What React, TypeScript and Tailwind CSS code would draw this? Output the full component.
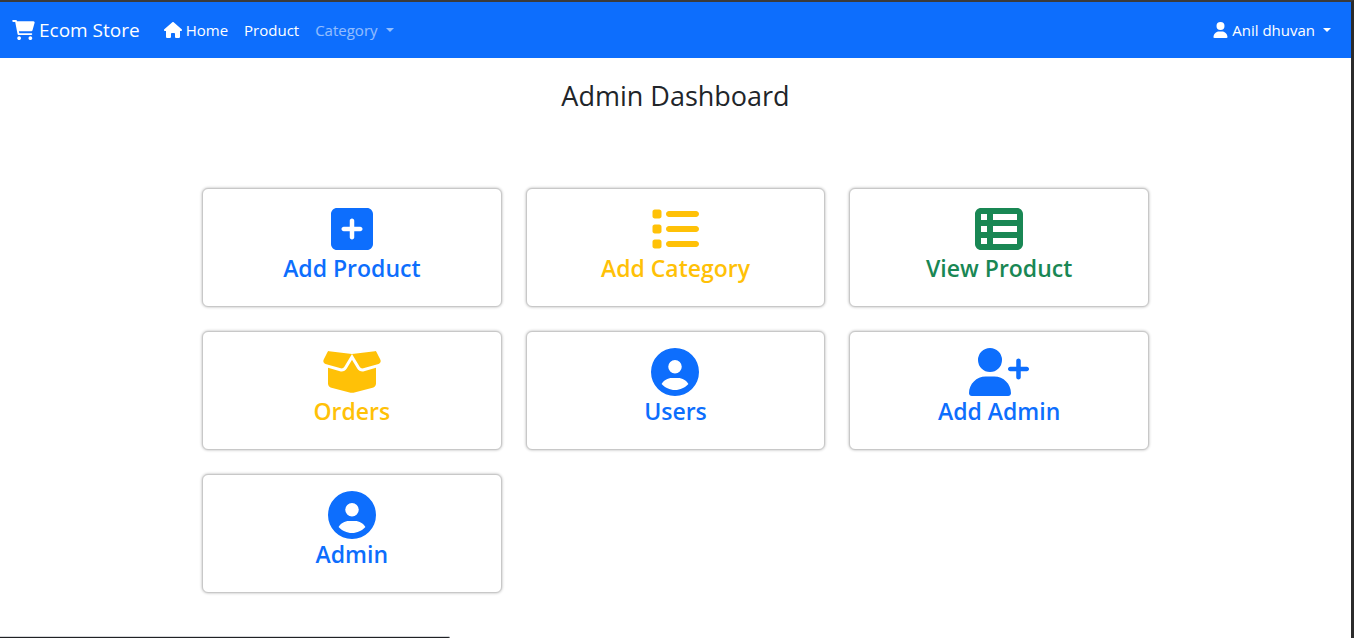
import type { ComponentType } from "react";
import {
  FaBoxOpen,
  FaCircleUser,
  FaHouse,
  FaList,
  FaSquarePlus,
  FaTableList,
  FaUser,
  FaUserPlus,
} from "react-icons/fa6";

type Card = {
  label: string;
  icon: ComponentType<{ className?: string }>;
  color: string;
};

const BLUE = "text-[#0d6efd]";
const YELLOW = "text-[#ffc107]";
const GREEN = "text-[#198754]";

const cards: Card[] = [
  { label: "Add Product", icon: FaSquarePlus, color: BLUE },
  { label: "Add Category", icon: FaList, color: YELLOW },
  { label: "View Product", icon: FaTableList, color: GREEN },
  { label: "Orders", icon: FaBoxOpen, color: YELLOW },
  { label: "Users", icon: FaCircleUser, color: BLUE },
  { label: "Add Admin", icon: FaUserPlus, color: BLUE },
  { label: "Admin", icon: FaCircleUser, color: BLUE },
];

function CartIcon({ className }: { className?: string }) {
  return (
    <svg viewBox="0 0 576 512" fill="currentColor" aria-hidden="true" className={className}>
      <path d="M96 0C107.5 0 117.4 8.19 119.6 19.51L121.1 32H541.8C562.1 32 578.3 52.25 572.6 72.66L518.6 264.7C514.7 278.5 502.1 288 487.8 288H170.7L179.9 336H488C501.3 336 512 346.7 512 360C512 373.3 501.3 384 488 384H159.1C148.5 384 138.6 375.8 136.4 364.5L76.14 48H24C10.75 48 0 37.25 0 24C0 10.75 10.75 0 24 0H96zM128 464C128 437.5 149.5 416 176 416C202.5 416 224 437.5 224 464C224 490.5 202.5 512 176 512C149.5 512 128 490.5 128 464zM512 464C512 490.5 490.5 512 464 512C437.5 512 416 490.5 416 464C416 437.5 437.5 416 464 416C490.5 416 512 437.5 512 464z" />
    </svg>
  );
}

function Caret() {
  return (
    <span
      aria-hidden="true"
      className="border-x-4 border-t-4 border-x-transparent border-t-current"
    />
  );
}

function Navbar() {
  return (
    <nav className="flex h-14 items-center px-3 text-[15px] leading-6 text-white">
      <a href="#" className="mr-4 flex items-center gap-1 text-[19px] leading-7">
        <CartIcon className="h-5 w-[23px]" />
        Ecom Store
      </a>
      <div className="flex flex-1 items-center">
        <a href="#" className="flex items-center gap-1 px-2">
          <FaHouse className="h-4 w-[18px]" />
          Home
        </a>
        <a href="#" className="px-2">
          Product
        </a>
        <button type="button" className="flex items-center gap-2 px-2 text-white/55">
          Category
          <Caret />
        </button>
      </div>
      <button type="button" className="flex items-center gap-2 px-2">
        <span className="flex items-center gap-1">
          <FaUser className="h-4 w-[15px]" />
          Anil dhuvan
        </span>
        <Caret />
      </button>
    </nav>
  );
}

function DashboardCard({ label, icon: Icon, color }: Card) {
  return (
    <a
      href="#"
      className={`flex h-[119px] flex-col items-center rounded-md border border-[#c8c8c8] bg-white pt-4 shadow-[0_0_3px_rgba(0,0,0,0.3)] ${color}`}
    >
      <Icon className="h-12 w-[60px]" />
      <h2 className="text-[23px] leading-[30px] font-semibold">{label}</h2>
    </a>
  );
}

export default function App() {
  return (
    <div className="flex min-h-screen flex-col border-t-2 border-r-3 border-t-[#3a3a3a] border-r-[#2b2b2b] bg-white font-['Open_Sans','Noto_Sans',sans-serif] text-[#212529]">
      <header className="bg-[#0d6efd]">
        <Navbar />
      </header>
      <main className="flex-1 pt-5">
        <h1 className="text-center text-[27px] leading-9">Admin Dashboard</h1>
        <div className="mx-auto mt-[74px] grid max-w-[971px] grid-cols-3 gap-6 px-3">
          {cards.map((card) => (
            <DashboardCard key={card.label} {...card} />
          ))}
        </div>
      </main>
      <div className="h-[2px] w-1/3 rounded-tr-sm border-t border-t-[#d5d7da] bg-[#202124]" />
    </div>
  );
}
